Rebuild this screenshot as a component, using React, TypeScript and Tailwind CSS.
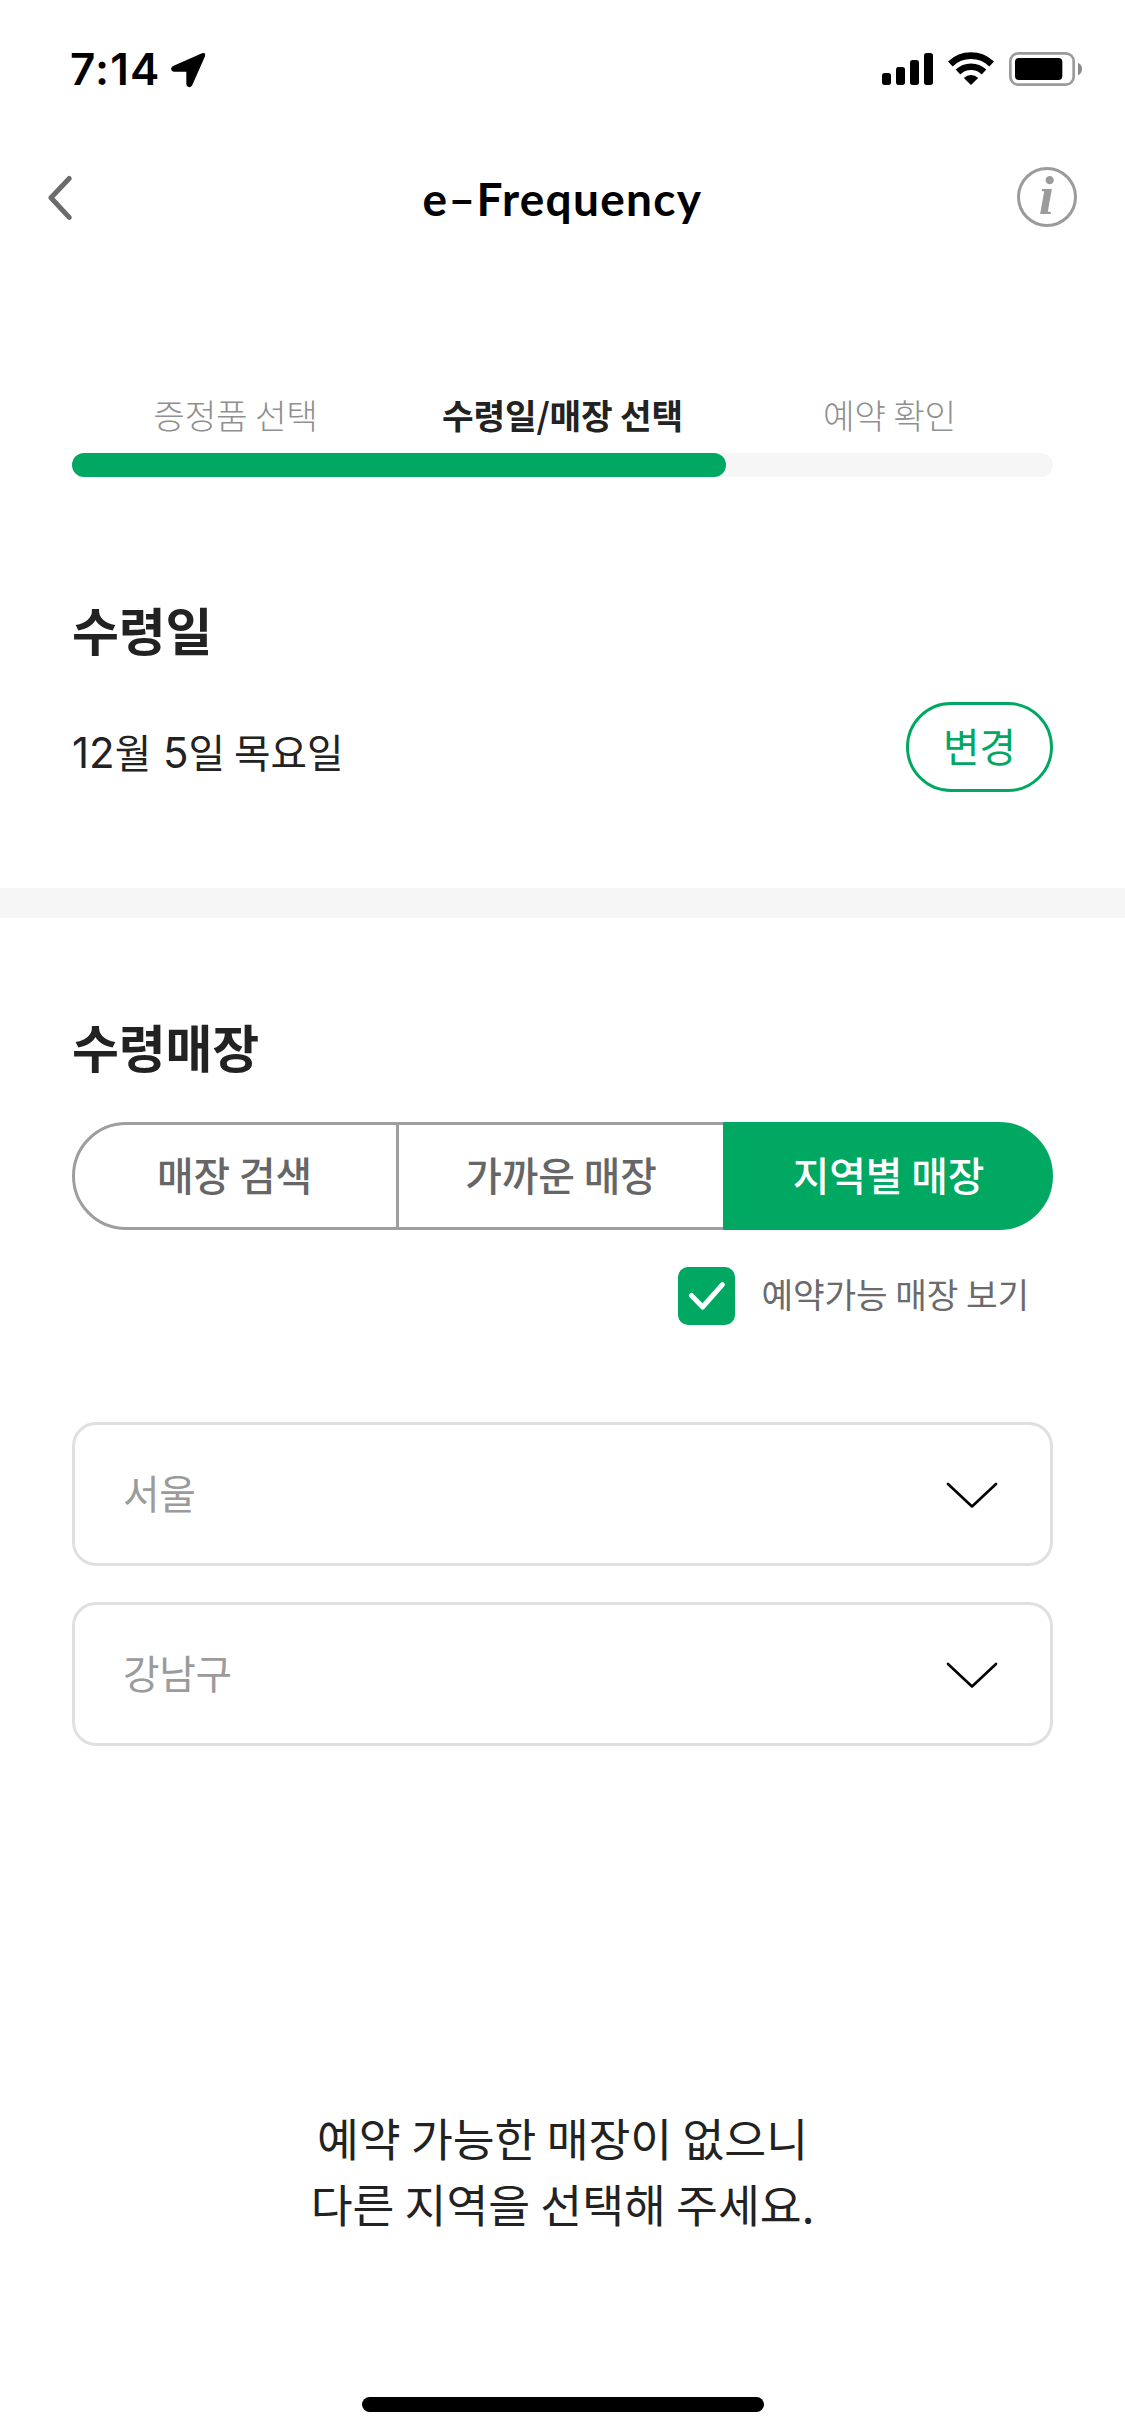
import type { ReactNode } from "react";

const STEPS = [
  { label: "증정품 선택", current: false },
  { label: "수령일/매장 선택", current: true },
  { label: "예약 확인", current: false },
];

function LocationArrow() {
  return (
    <svg className="h-[36px] w-[36px]" viewBox="510 65 108 108" fill="#000">
      <path d="M606 69Q618 65 615 78L577 164Q573 172 566 170Q559 169 559 161V124H522Q514 123 513 115Q514 109 521 106Z" />
    </svg>
  );
}

function SignalIcon() {
  return (
    <svg className="h-[34px] w-[51px]" viewBox="396 66 153 102" fill="#000">
      <rect x="396" y="129" width="27" height="36" rx="8" />
      <rect x="438" y="111" width="27" height="54" rx="8" />
      <rect x="480" y="90" width="27" height="75" rx="8" />
      <rect x="522" y="69" width="27" height="96" rx="8" />
    </svg>
  );
}

function WifiIcon() {
  return (
    <svg className="h-[34px] w-[46px]" viewBox="594 66 138 102" fill="none" stroke="#000" strokeWidth="20">
      <path d="M601 102A89 89 0 0 1 725 102" />
      <path d="M624 126A56 56 0 0 1 702 126" />
      <path d="M663 165L641.5 144A30.5 30.5 0 0 1 684.5 144Z" fill="#000" stroke="none" />
    </svg>
  );
}

function BatteryIcon() {
  return (
    <svg className="h-[34px] w-[73px]" viewBox="777 66 219 102">
      <rect x="781" y="70" width="190" height="94" rx="24" fill="none" stroke="#9b9b9b" strokeWidth="8" />
      <rect x="795" y="84" width="142" height="66" rx="12" fill="#000" />
      <path d="M984 98Q996 104 996 117Q996 130 984 136Z" fill="#8a8a8a" />
    </svg>
  );
}

function StatusBar() {
  return (
    <div className="flex h-[138px] items-center pl-[70px] pr-[43px]">
      <span className="w-[91px] whitespace-nowrap font-[Inter,sans-serif] text-[44px] font-semibold leading-[54px] tracking-[1.2px] text-black">7:14</span>
      <div className="ml-[9px] pt-px">
        <LocationArrow />
      </div>
      <div className="ml-auto flex items-center">
        <SignalIcon />
        <div className="ml-[15px] mr-[15px]">
          <WifiIcon />
        </div>
        <BatteryIcon />
      </div>
    </div>
  );
}

function NavBar() {
  return (
    <header className="grid h-[120px] grid-cols-[1fr_auto_1fr] items-center px-[48px]">
      <button aria-label="Back" className="h-[46px] w-[24px]">
        <svg className="h-[46px] w-[24px]" viewBox="0 0 24 46" fill="none" stroke="#6b6b6b" strokeWidth="5" strokeLinecap="round" strokeLinejoin="round">
          <path d="M21.2 3.5L3 22.8L21.2 42.4" />
        </svg>
      </button>
      <h1 className="pt-[2px] font-[Lato,sans-serif] text-[46px] font-bold leading-[54px] tracking-[1.3px] text-black">
        e–Frequency
      </h1>
      <button
        aria-label="Information"
        className="mb-[2px] flex h-[60px] w-[60px] items-center justify-center justify-self-end rounded-full border-[3px] border-[#9b9b9b]"
      >
        <span className="pb-[2px] pr-[1px] font-['Liberation_Serif',serif] text-[55px] font-bold italic leading-[54px] text-[#9b9b9b]">i</span>
      </button>
    </header>
  );
}

function StepProgress() {
  return (
    <div>
      <ol className="grid grid-cols-3 text-center text-[34.4px] leading-[50px] tracking-[-0.2px]">
        {STEPS.map((step) => (
          <li key={step.label} className={step.current ? "font-bold text-[#222222]" : "font-light text-[#8f8f8f]"}>
            {step.label}
          </li>
        ))}
      </ol>
      <div className="mt-[14px] h-[24px] rounded-full bg-[#f6f6f6]">
        <div className="h-full w-2/3 rounded-full bg-[#00a862]" />
      </div>
    </div>
  );
}

function SectionTitle({ children }: { children: ReactNode }) {
  return <h2 className="text-[51px] font-bold leading-[70px] tracking-[-0.2px] text-[#222222]">{children}</h2>;
}

function Digits({ children }: { children: ReactNode }) {
  return <span className="whitespace-pre font-[Inter,sans-serif] text-[42px] leading-none">{children}</span>;
}

function StoreTabs() {
  const base = "h-[108px] border-[3px] pb-[4px] text-[39.8px] font-medium leading-[58px] tracking-[-0.1px]";
  return (
    <div className="flex">
      <button className={`${base} w-[327px] rounded-l-full border-[#9e9e9e] pr-[2px] text-[#666666]`}>매장 검색</button>
      <button className={`${base} w-[327px] border-x-0 border-[#9e9e9e] pr-[3px] text-[#666666]`}>가까운 매장</button>
      <button className={`${base} -ml-[3px] w-[330px] rounded-r-full border-[#00a862] bg-[#00a862] pl-px text-white`}>
        지역별 매장
      </button>
    </div>
  );
}

function SelectField({ value }: { value: string }) {
  return (
    <button className="flex h-[144px] w-full items-center justify-between rounded-[24px] border-[3px] border-[#e0e0e0] pl-[48px] pr-[52px]">
      <span className="pb-[4px] text-[39.8px] leading-[58px] tracking-[-0.4px] text-[#9b9b9b]">{value}</span>
      <svg className="h-[28px] w-[52px]" viewBox="0 0 52 28" fill="none" stroke="#000" strokeWidth="2.6" strokeLinecap="round" strokeLinejoin="round">
        <path d="M2 4L26 26.5L50 4" />
      </svg>
    </button>
  );
}

export default function App() {
  return (
    <div className="flex h-[2436px] w-[1125px] flex-col bg-white font-['Noto_Sans_CJK_KR',sans-serif]">
      <StatusBar />
      <NavBar />

      <section className="px-[72px] pb-[96px] pt-[131px]">
        <StepProgress />
        <div className="mt-[117px]">
          <SectionTitle>수령일</SectionTitle>
        </div>
        <div className="mt-[38px] flex h-[90px] items-start justify-between">
          <p className="mt-[24px] text-[39.7px] leading-[50px] text-[#222222]">
            <Digits>12</Digits>월<Digits> 5</Digits>일 목요일
          </p>
          <button className="h-[90px] w-[147px] rounded-full border-[3px] border-[#00a862] pb-[5px] text-[39.7px] leading-[58px] text-[#00a862]">
            변경
          </button>
        </div>
      </section>

      <div className="h-[30px] bg-[#f6f6f6]" />

      <section className="px-[72px] pt-[93px]">
        <SectionTitle>수령매장</SectionTitle>
        <div className="mt-[41px]">
          <StoreTabs />
        </div>
        <label className="mt-[37px] flex h-[58px] items-center justify-end pr-[24px]">
          <span className="flex h-[58px] w-[57px] items-center justify-center rounded-[10px] bg-[#00a862]">
            <svg className="h-[58px] w-[57px]" viewBox="0 0 57 58" fill="none" stroke="#fff" strokeWidth="5" strokeLinecap="round" strokeLinejoin="round">
              <path d="M13.4 28.5L24.6 40L44.4 17.6" />
            </svg>
          </span>
          <span className="ml-[26px] pb-[6px] text-[34.4px] leading-[50px] tracking-[-0.1px] text-[#6b6b6b]">예약가능 매장 보기</span>
        </label>
        <div className="mt-[97px] flex flex-col gap-[36px]">
          <SelectField value="서울" />
          <SelectField value="강남구" />
        </div>
      </section>

      <p className="mt-[358px] text-center text-[45.5px] leading-[66px] text-[#222222]">
        예약 가능한 매장이 없으니
        <br />
        다른 지역을 선택해 주세요.
      </p>

      <div className="mx-auto mb-[24px] mt-auto h-[15px] w-[402px] rounded-full bg-black" />
    </div>
  );
}
